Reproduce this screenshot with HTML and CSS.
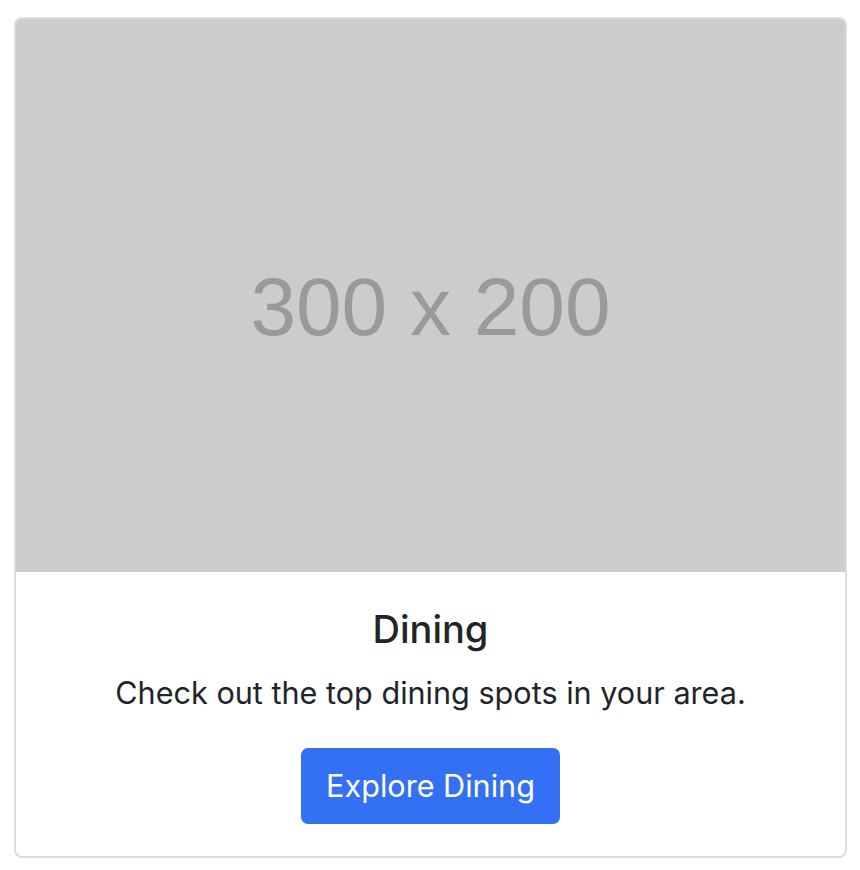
FILE: index.html
```html
<!DOCTYPE html>
<html>
<head>
<meta charset="utf-8">
<link rel="stylesheet" href="styles.css">
</head>
<body>
<div class="card">
  <div class="card-img">
    <span class="placeholder-text">300 x 200</span>
  </div>
  <div class="card-body">
    <h5 class="card-title">Dining</h5>
    <p class="card-text">Check out the top dining spots in your area.</p>
    <a class="btn" href="#">Explore Dining</a>
  </div>
</div>
</body>
</html>
```

FILE: styles.css
```css
html, body {
  margin: 0;
  padding: 0;
  background: #ffffff;
}
body {
  padding: 17px 13px 0 14px;
  font-family: Inter, "Noto Sans", sans-serif;
  color: #212529;
}
.card {
  width: 829px;
  border: 2px solid #dcdcdc;
  border-radius: 8px;
  overflow: hidden;
  background: #fff;
}
.card-img {
  height: 553px;
  background: #cccccc;
  display: flex;
  align-items: center;
  justify-content: center;
}
.placeholder-text {
  font-family: "Liberation Sans", Arial, sans-serif;
  font-size: 82px;
  color: #9a9a9a;
  margin-top: 22px;
  filter: blur(0.7px);
}
.card-body {
  padding: 35px 29px 32px;
  text-align: center;
}
.card-title {
  margin: 0 0 17px;
  font-size: 38px;
  font-weight: 500;
  line-height: 1.2;
}
.card-text {
  margin: 0 0 32px;
  font-size: 30.6px;
  line-height: 46px;
}
.btn {
  display: inline-block;
  background: #3370f4;
  color: #fff;
  text-decoration: none;
  font-size: 30.6px;
  line-height: 46px;
  padding: 15px 25.5px;
  border-radius: 7px;
}
```
